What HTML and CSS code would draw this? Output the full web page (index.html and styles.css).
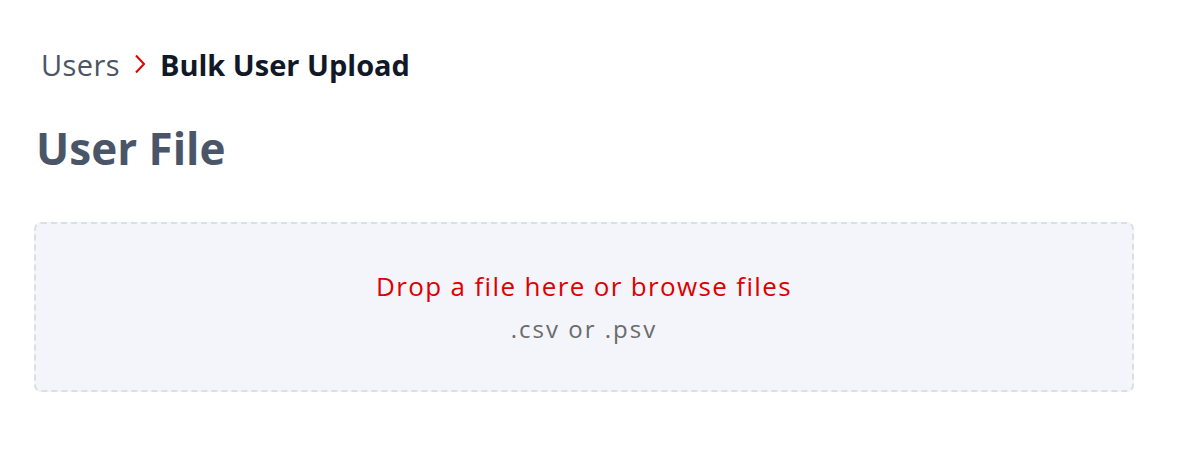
FILE: index.html
```html
<!DOCTYPE html>
<html lang="en">
<head>
  <meta charset="UTF-8" />
  <meta name="viewport" content="width=device-width, initial-scale=1.0"/>
  <title>Bulk User Upload</title>
  <link rel="stylesheet" href="styles.css">
</head>
<body>
  <div class="page">
    <nav class="breadcrumb">
      <a class="crumb" href="#">Users</a>
      <svg class="chevron" width="12" height="20" viewBox="0 0 12 20">
        <path d="M2 1.5 L10 10 L2 18.5" fill="none" stroke="#e00000" stroke-width="2"/>
      </svg>
      <span class="current">Bulk User Upload</span>
    </nav>

    <h1 class="title">User File</h1>

    <div class="dropzone">
      <div class="drop-text">Drop a file here or browse files</div>
      <div class="drop-hint">.csv or .psv</div>
    </div>
  </div>
</body>
</html>
```

FILE: styles.css
```css
body {
  margin: 0;
  font-family: "Open Sans", Lato, sans-serif;
  background: #ffffff;
}

.page {
  padding: 44px 46px 0 34px;
}

.breadcrumb {
  display: flex;
  align-items: center;
  gap: 14px;
  padding-left: 7px;
  font-size: 29px;
  height: 40px;
}

.crumb {
  color: #4b5563;
  text-decoration: none;
  letter-spacing: 0.4px;
}

.current {
  color: #111827;
  font-weight: 700;
}

.title {
  margin: 34px 0 0 2px;
  font-size: 44px;
  font-weight: 700;
  color: #4a5568;
  line-height: 60px;
}

.dropzone {
  margin-top: 44px;
  height: 164px;
  border: 2px dashed #dcdee6;
  border-radius: 7px;
  background: #f4f5fa;
  display: flex;
  flex-direction: column;
  align-items: center;
  justify-content: center;
  gap: 8px;
  padding-bottom: 2px;
}

.drop-text {
  color: #dd0000;
  font-size: 26px;
  letter-spacing: 1.35px;
}

.drop-hint {
  color: #6b6b6b;
  font-size: 24px;
  letter-spacing: 2px;
}
```
